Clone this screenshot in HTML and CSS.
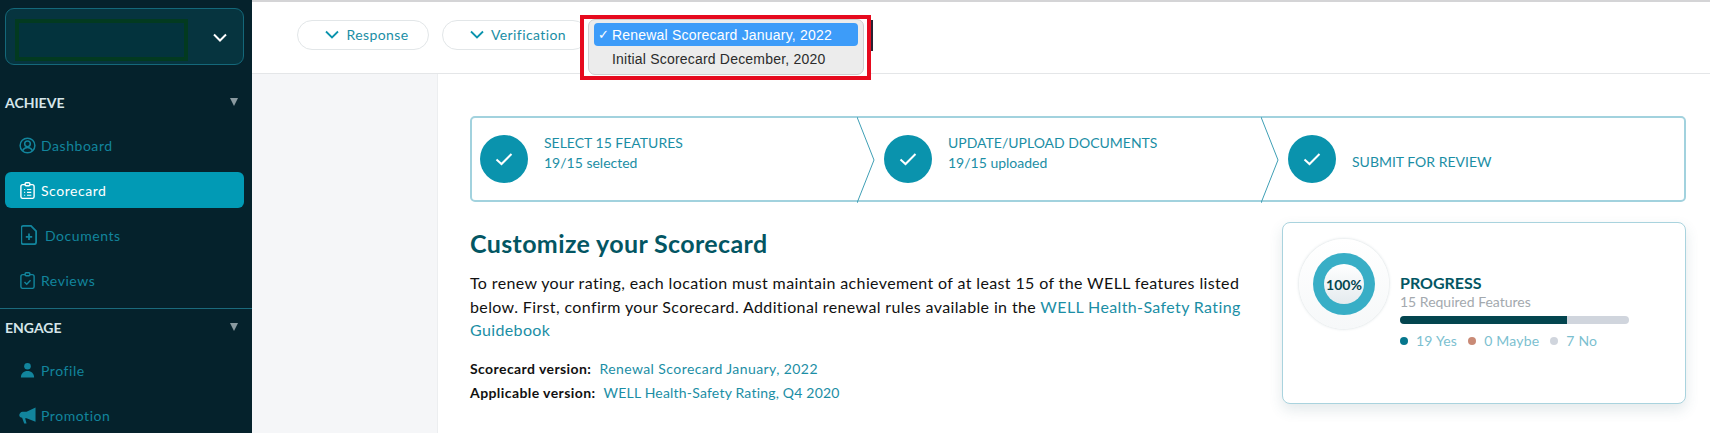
FILE: index.html
```html
<!DOCTYPE html>
<html lang="en">
	<head>
		<meta charset="UTF-8" />
		<meta name="viewport" content="width=device-width, initial-scale=1.0" />
		<title>Scorecard</title>
		<link rel="stylesheet" href="styles.css">
	</head>
	<body>
		<aside class="sidebar">
			<div class="project-select">
				<div class="project-name"></div>
				<svg class="project-arrow" width="14" height="9" viewBox="0 0 14 9"><path d="M1 1.500l6 6 6-6" fill="none" stroke="#fff" stroke-width="2"/></svg>
			</div>

			<div class="nav-title nav-title-first">ACHIEVE <span class="nav-caret"></span></div>
			<a class="nav-item">
				<svg width="17" height="17" viewBox="0 0 18 18" fill="none" stroke="currentColor" stroke-width="1.600"><circle cx="9" cy="9" r="7.800"/><circle cx="9" cy="7.200" r="3"/><path d="M3.800 14.500c1-2.300 3-3.500 5.200-3.500s4.200 1.200 5.200 3.500"/></svg>
				Dashboard
			</a>
			<a class="nav-item active">
				<svg width="17" height="17" viewBox="0 0 18 18" fill="none" stroke="currentColor" stroke-width="1.500"><rect x="2" y="2.800" width="14" height="14.500" rx="2"/><rect x="6.500" y="0.800" width="5" height="3.200" rx="1" fill="#019ab5"/><path d="M5.500 8h1M8.500 8h4.500M5.500 11h1M8.500 11h4.500M5.500 14h1M8.500 14h4.500" stroke-width="1.200"/></svg>
				Scorecard
			</a>
			<a class="nav-item nav-item-wide">
				<svg width="16" height="20" viewBox="0 0 16 20" fill="none" stroke="currentColor" stroke-width="1.800"><path d="M2.300 0.900h7.700l5.100 5.100v11.200a2 2 0 0 1-2 2h-10.800a2 2 0 0 1-2-2v-14.300a2 2 0 0 1 2-2z"/><path d="M8 8.500v6.500M4.800 11.800h6.400"/></svg>
				Documents
			</a>
			<a class="nav-item">
				<svg width="17" height="17" viewBox="0 0 18 18" fill="none" stroke="currentColor" stroke-width="1.500"><rect x="2" y="2.800" width="14" height="14.500" rx="2"/><rect x="6.500" y="0.800" width="5" height="3.200" rx="1" fill="#05222c"/><path d="M5.800 10.500l2.400 2.400 4-4.200"/></svg>
				Reviews
			</a>

			<div class="nav-title nav-title-line">ENGAGE <span class="nav-caret"></span></div>
			<a class="nav-item">
				<svg width="17" height="17" viewBox="0 0 18 18" fill="currentColor"><circle cx="9" cy="4.500" r="3.500"/><path d="M2 16.500c0-4.500 3-7 7-7s7 2.500 7 7z"/></svg>
				Profile
			</a>
			<a class="nav-item">
				<svg width="17" height="17" viewBox="0 0 18 18" fill="currentColor"><path d="M17.500 0.500v15l-9.500-3.500h-1.500l1.500 5.500h-2.500l-2.200-6c-1.600-.3-3-1.200-3-2.800s1.500-3.700 3.500-3.700h4.200z"/></svg>
				Promotion
			</a>
		</aside>

		<div class="page">
			<header class="topbar">
				<button class="pill pill-response">
					<svg width="14" height="9" viewBox="0 0 14 9"><path d="M1 1.500l6 6 6-6" fill="none" stroke="#0a93ad" stroke-width="1.800"/></svg>
					Response
				</button>
				<button class="pill pill-verification">
					<svg width="14" height="9" viewBox="0 0 14 9"><path d="M1 1.500l6 6 6-6" fill="none" stroke="#0a93ad" stroke-width="1.800"/></svg>
					Verification
				</button>
				<div class="select-back"></div>
				<div class="version-menu">
					<div class="version-list">
						<div class="version-option selected"><span class="tick">✓</span>Renewal Scorecard January, 2022</div>
						<div class="version-option">Initial Scorecard December, 2020</div>
					</div>
				</div>
			</header>

			<div class="body-row">
				<div class="gutter"></div>
				<main class="content">
					<div class="stepper">
						<div class="step step-one">
							<div class="step-circle"><svg width="18" height="14" viewBox="0 0 18 14"><path d="M1.500 7.500l5 4.500 10-10" fill="none" stroke="#fff" stroke-width="2"/></svg></div>
							<div class="step-text">
								<div class="step-title">SELECT 15 FEATURES</div>
								<div class="step-sub">19/15 selected</div>
							</div>
							<svg class="step-arrow" width="18" height="86" viewBox="0 0 18 86"><path d="M0 0l17 43-17 43" fill="none" stroke="#3f9fb5" stroke-width="1"/></svg>
						</div>
						<div class="step step-two">
							<div class="step-circle"><svg width="18" height="14" viewBox="0 0 18 14"><path d="M1.500 7.500l5 4.500 10-10" fill="none" stroke="#fff" stroke-width="2"/></svg></div>
							<div class="step-text">
								<div class="step-title">UPDATE/UPLOAD DOCUMENTS</div>
								<div class="step-sub">19/15 uploaded</div>
							</div>
							<svg class="step-arrow" width="18" height="86" viewBox="0 0 18 86"><path d="M0 0l17 43-17 43" fill="none" stroke="#3f9fb5" stroke-width="1"/></svg>
						</div>
						<div class="step step-three">
							<div class="step-circle"><svg width="18" height="14" viewBox="0 0 18 14"><path d="M1.500 7.500l5 4.500 10-10" fill="none" stroke="#fff" stroke-width="2"/></svg></div>
							<div class="step-text">
								<div class="step-title">SUBMIT FOR REVIEW</div>
							</div>
						</div>
					</div>

					<div class="intro-row">
						<section class="intro">
							<h1>Customize your Scorecard</h1>
							<p>To renew your rating, each location must maintain achievement of at least 15 of the WELL features listed below. First, confirm your Scorecard. Additional renewal rules available in the <a class="link">WELL Health-Safety Rating Guidebook</a></p>
							<div class="version-line"><b>Scorecard version:</b> <a class="link">Renewal Scorecard January, 2022</a></div>
							<div class="version-line version-line-applicable"><b>Applicable version:</b> <a class="link">WELL Health-Safety Rating, Q4 2020</a></div>
						</section>

						<section class="progress-card">
							<div class="ring-outer">
								<div class="ring">
									<div class="ring-inner">100%</div>
								</div>
							</div>
							<div class="progress-info">
								<div class="progress-title">PROGRESS</div>
								<div class="progress-sub">15 Required Features</div>
								<div class="bar"><div class="bar-fill" style="width: 73%"></div></div>
								<div class="legend">
									<span class="dot dot-yes"></span><span class="legend-label">19 Yes</span>
									<span class="dot dot-maybe"></span><span class="legend-label">0 Maybe</span>
									<span class="dot dot-no"></span><span class="legend-label">7 No</span>
								</div>
							</div>
						</section>
					</div>
				</main>
			</div>
		</div>
	</body>
</html>
```

FILE: styles.css
```css
* {
	box-sizing: border-box;
}
html,
body {
	height: 100%;
}
body {
	margin: 0;
	display: flex;
	height: 100vh;
	overflow: hidden;
	font-family: Lato, "Open Sans", sans-serif;
	background-color: #ffffff;
	color: #111;
}

/* sidebar */
.sidebar {
	width: 252px;
	flex-shrink: 0;
	background-color: #05222c;
	padding: 8px 8px 0 5px;
	overflow: hidden;
}
.project-select {
	height: 57px;
	display: flex;
	align-items: center;
	justify-content: space-between;
	padding: 2px 16px 0 9px;
	background-color: #06343f;
	border: 1px solid #14687a;
	border-radius: 9px;
}
.project-name {
	width: 173px;
	height: 42px;
	margin-top: 5px;
	background-color: #03333d;
	border: 4px solid #023a20;
}
.nav-title {
	display: flex;
	align-items: center;
	justify-content: space-between;
	padding-right: 6px;
	font-size: 14px;
	font-weight: 700;
	color: #d6e6ea;
	height: 20px;
}
.nav-title-first {
	margin-top: 27px;
	margin-bottom: 15px;
}
.nav-title-line {
	position: relative;
	margin-top: 19px;
	margin-bottom: 15px;
}
.nav-title-line::before {
	content: "";
	position: absolute;
	left: -5px;
	right: -8px;
	top: -9px;
	border-top: 1px solid #1b6a7c;
}
.nav-caret {
	width: 0;
	height: 0;
	border-left: 4px solid transparent;
	border-right: 4px solid transparent;
	border-top: 8px solid #8a9aa0;
}
.nav-item {
	display: flex;
	align-items: center;
	gap: 5px;
	height: 36px;
	margin-bottom: 9px;
	padding-left: 14px;
	font-size: 14px;
	color: #12859d;
	letter-spacing: 0.55px;
	border-radius: 6px;
}
.nav-item-wide {
	gap: 8px;
	padding-left: 16px;
}
.nav-item.active {
	background-color: #019ab5;
	color: #ffffff;
}

/* top bar */
.page {
	flex: 1;
	display: flex;
	flex-direction: column;
	min-width: 0;
}
.topbar {
	position: relative;
	height: 74px;
	flex-shrink: 0;
	display: flex;
	align-items: flex-start;
	gap: 13px;
	padding: 18px 0 0 45px;
	background-color: #ffffff;
	border-top: 2px solid #d4d4d6;
	border-bottom: 1px solid #e4e6e8;
}
.pill {
	display: flex;
	align-items: center;
	justify-content: center;
	gap: 7px;
	height: 30px;
	font-family: inherit;
	font-size: 14px;
	letter-spacing: 0.4px;
	color: #1b8ea5;
	background-color: #ffffff;
	border: 1px solid #e2e6e8;
	border-radius: 15px;
	padding: 0 0 2px 8px;
}
.pill-response {
	width: 132px;
}
.pill-verification {
	width: 146px;
	padding-left: 6px;
}
.select-back {
	position: absolute;
	left: 619px;
	top: 18px;
	width: 2px;
	height: 31px;
	background-color: #2a2433;
}
.version-menu {
	position: absolute;
	left: 328px;
	top: 13px;
	width: 291px;
	height: 65px;
	padding: 0 3px 1px 4px;
	background-color: #ffffff;
	border: 4px solid #e60a1e;
}
.version-list {
	height: 100%;
	padding: 3px 5px 0;
	background-color: #ececec;
	border: 1px solid #cfcfcf;
	border-radius: 7px;
}
.version-option {
	position: relative;
	display: flex;
	align-items: center;
	height: 23px;
	padding-left: 18px;
	font-family: "Liberation Sans", Arial, sans-serif;
	font-size: 14px;
	letter-spacing: 0.2px;
	color: #2b2b2b;
	border-radius: 4px;
}
.version-option + .version-option {
	margin-top: 1px;
}
.version-option.selected {
	background-color: #3d9cf9;
	color: #ffffff;
}
.tick {
	position: absolute;
	left: 4px;
	font-size: 13px;
}

/* content */
.body-row {
	flex: 1;
	display: flex;
	min-height: 0;
}
.gutter {
	width: 186px;
	flex-shrink: 0;
	background-color: #f5f6f8;
	border-right: 1px solid #eceef0;
}
.content {
	flex: 1;
	padding: 42px 24px 0 32px;
	min-width: 0;
}
.stepper {
	display: flex;
	height: 86px;
	background-color: #fff;
	border: 2px solid #a2d2de;
	border-radius: 5px;
}
.step {
	position: relative;
	display: flex;
	align-items: center;
	gap: 16px;
	flex-shrink: 0;
	padding-left: 27px;
}
.step-one {
	width: 385px;
	padding-left: 8px;
}
.step-two {
	width: 404px;
}
.step-three {
	flex: 1;
}
.step-circle {
	width: 48px;
	height: 48px;
	flex-shrink: 0;
	display: flex;
	align-items: center;
	justify-content: center;
	border-radius: 50%;
	background-color: #0a93ad;
}
.step-title,
.step-sub {
	font-size: 14px;
	color: #1b8ea5;
	line-height: 20px;
}
.step-text {
	margin-top: -13px;
}
.step-three .step-text {
	margin-top: 5px;
}
.step-arrow {
	position: absolute;
	right: -18px;
	top: -1px;
}
.intro-row {
	display: flex;
	justify-content: space-between;
	align-items: flex-start;
}
.intro {
	width: 775px;
	padding-top: 25px;
}
.intro h1 {
	margin: 0 0 12px;
	font-size: 25px;
	letter-spacing: 0.37px;
	line-height: 32px;
	font-weight: 700;
	color: #035663;
}
.intro p {
	margin: 0 0 15px;
	font-size: 16px;
	letter-spacing: 0.37px;
	line-height: 23.500px;
	color: #111;
}
.link {
	color: #1b8ea5;
}
.version-line {
	font-size: 14px;
	letter-spacing: 0.42px;
	line-height: 24px;
}
.version-line b {
	font-weight: 700;
	margin-right: 4px;
}
.version-line-applicable .link {
	letter-spacing: 0.2px;
}

/* progress card */
.progress-card {
	width: 404px;
	height: 182px;
	margin-top: 20px;
	display: flex;
	align-items: flex-start;
	padding: 16px 0 0 16px;
	background-color: #fff;
	border: 1px solid #a9d3de;
	border-radius: 8px;
	box-shadow: 0 6px 14px rgba(60, 100, 110, 0.14);
}
.ring-outer {
	width: 90px;
	height: 90px;
	flex-shrink: 0;
	display: flex;
	align-items: center;
	justify-content: center;
	border-radius: 50%;
	background: linear-gradient(#ffffff, #f6f8f9);
	box-shadow: 0 0 3px rgba(90, 120, 130, 0.3);
}
.ring {
	width: 62px;
	height: 62px;
	display: flex;
	align-items: center;
	justify-content: center;
	border-radius: 50%;
	background-color: #38aec6;
}
.ring-inner {
	width: 40px;
	height: 40px;
	display: flex;
	align-items: center;
	justify-content: center;
	border-radius: 50%;
	background: linear-gradient(#ffffff, #e4ebee);
	font-size: 14px;
	font-weight: 700;
	color: #03454f;
}
.progress-info {
	margin-left: 11px;
	padding-top: 34px;
	width: 229px;
}
.progress-title {
	font-size: 16px;
	line-height: 20px;
	font-weight: 700;
	color: #035663;
}
.progress-sub {
	font-size: 14px;
	line-height: 17px;
	color: #a3a9ae;
	margin-bottom: 6px;
}
.bar {
	height: 8px;
	border-radius: 4px;
	overflow: hidden;
	background-color: #d0d5dd;
}
.bar-fill {
	height: 100%;
	background-color: #03454f;
}
.legend {
	display: flex;
	align-items: center;
	margin-top: 8px;
	font-size: 14px;
	letter-spacing: 0.2px;
	line-height: 18px;
	color: #7cbfd0;
}
.dot {
	width: 8px;
	height: 8px;
	border-radius: 50%;
	margin-right: 8px;
}
.legend-label {
	margin-right: 11px;
}
.dot-yes {
	background-color: #06778d;
}
.dot-maybe {
	background-color: #c98a76;
}
.dot-no {
	background-color: #d0d5dd;
}
```
